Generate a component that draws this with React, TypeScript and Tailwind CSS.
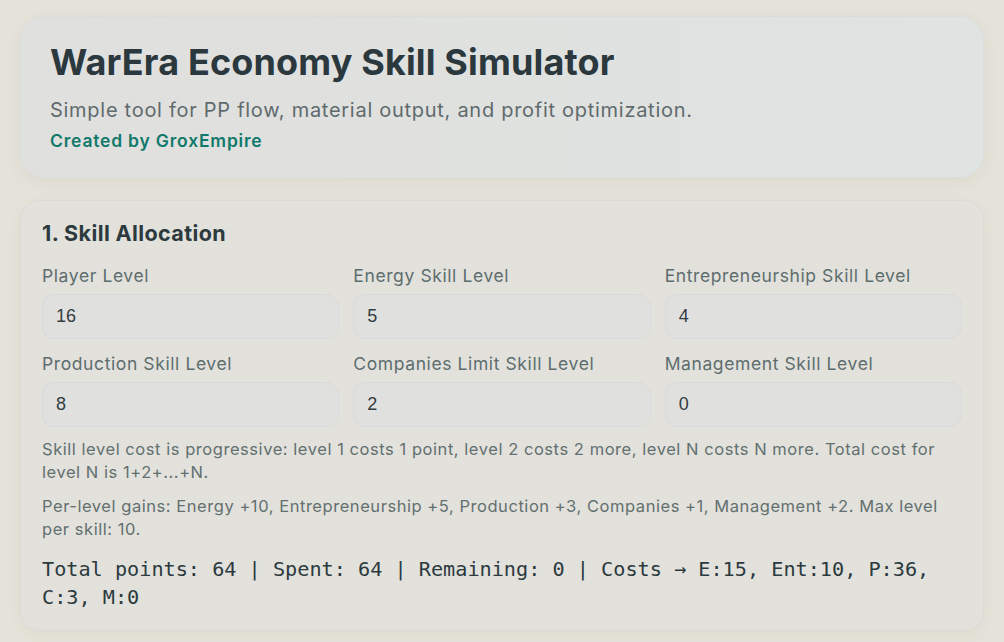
import React from "react";

type Field = { label: string; value: number };

const fields: Field[] = [
  { label: "Player Level", value: 16 },
  { label: "Energy Skill Level", value: 5 },
  { label: "Entrepreneurship Skill Level", value: 4 },
  { label: "Production Skill Level", value: 8 },
  { label: "Companies Limit Skill Level", value: 2 },
  { label: "Management Skill Level", value: 0 },
];

const sans = "font-['Inter','Noto_Sans',sans-serif]";

const SkillField: React.FC<Field> = ({ label, value }) => (
  <label className="flex flex-col">
    <span className="text-[17.5px] leading-[24px] tracking-[0.6px] text-[#5d6d6e] mb-[6px]">{label}</span>
    <input
      type="number"
      defaultValue={value}
      className="h-[45px] rounded-[12px] border border-[#d8dbdb] bg-[#e0e0de] px-[13px] text-[18px] text-[#333d41] font-['Liberation_Sans',Arial,sans-serif] outline-none"
    />
  </label>
);

export default function App() {
  return (
    <div className={`min-h-screen bg-[#e5e3d9] px-5 pt-4 pb-4 ${sans}`}>
      <header className="rounded-[24px] border border-[#d9dedd] bg-gradient-to-r from-[#e0e0de] to-[#dfe3e1] px-[29px] pt-[23px] pb-[25px] shadow-[0_4px_14px_rgba(120,120,100,0.08)]">
        <h1 className="text-[36px] leading-[44px] font-bold tracking-[0.15px] text-[#2b383e]">
          WarEra Economy Skill Simulator
        </h1>
        <p className="mt-[13px] text-[20px] leading-[26px] tracking-[0.72px] text-[#5f6a6d]">
          Simple tool for PP flow, material output, and profit optimization.
        </p>
        <p className="mt-[7px] text-[17.5px] leading-[22px] tracking-[0.8px] font-semibold text-[#11796b]">
          Created by GroxEmpire
        </p>
      </header>

      <section className="mt-[22px] rounded-[20px] border border-[#dadbd6] bg-[#e2e1dc] px-[21px] pt-[18px] pb-[19px] shadow-[0_4px_14px_rgba(120,120,100,0.06)]">
        <h2 className="text-[21.5px] leading-[28px] font-bold tracking-[0.4px] text-[#2c3a3e]">1. Skill Allocation</h2>
        <div className="mt-[17px] grid grid-cols-3 gap-x-[14px] gap-y-[13px]">
          {fields.map((f) => (
            <SkillField key={f.label} {...f} />
          ))}
        </div>
        <p className="mt-[11px] text-[16.5px] leading-[23px] tracking-[0.55px] text-[#62706f]">
          Skill level cost is progressive: level 1 costs 1 point, level 2 costs 2 more, level N costs N more. Total cost for
          level N is 1+2+...+N.
        </p>
        <p className="mt-[11px] text-[16.5px] leading-[23px] tracking-[0.55px] text-[#62706f]">
          Per-level gains: Energy +10, Entrepreneurship +5, Production +3, Companies +1, Management +2. Max level per skill: 10.
        </p>
        <p className="mt-[14px] text-[20.2px] leading-[28px] text-[#2c3a3e] font-['DejaVu_Sans_Mono','Liberation_Mono',monospace]">
          Total points: 64 | Spent: 64 | Remaining: 0 | Costs → E:15, Ent:10, P:36, C:3, M:0
        </p>
      </section>
    </div>
  );
}
